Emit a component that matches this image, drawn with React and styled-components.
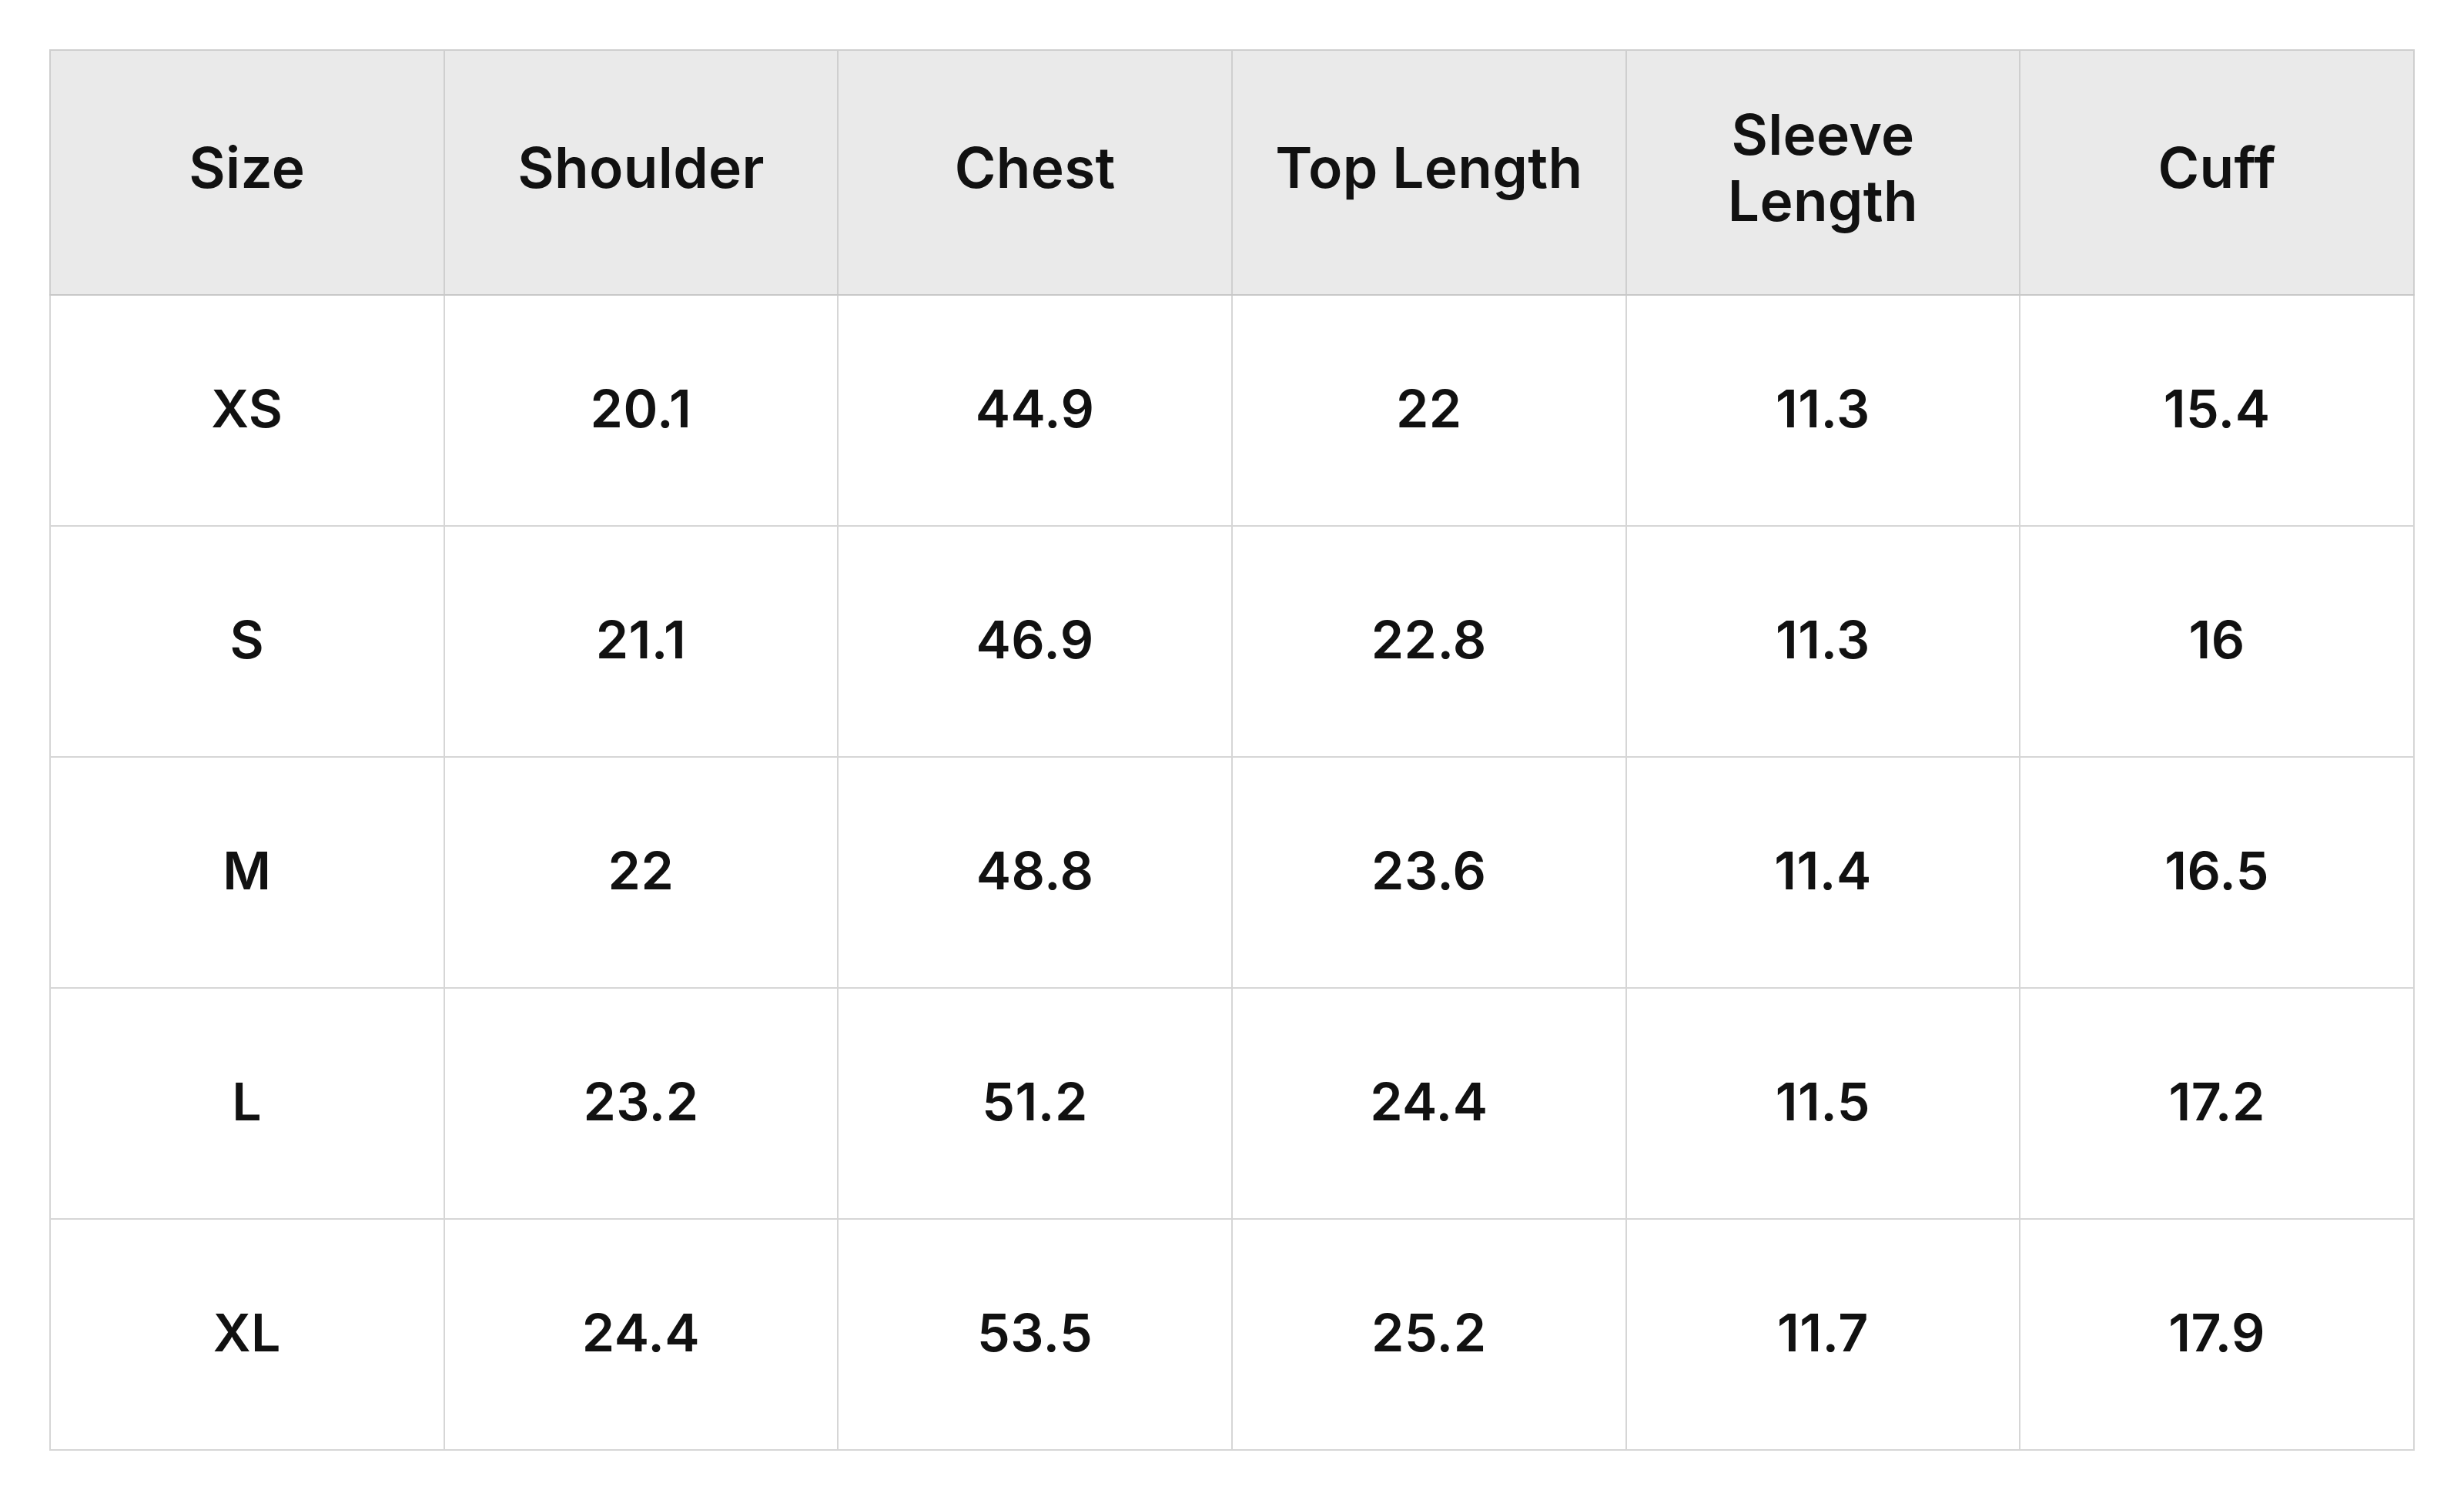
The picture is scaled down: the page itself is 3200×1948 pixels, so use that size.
import React from "react";
import styled, { createGlobalStyle } from "styled-components";

const Global = createGlobalStyle`
  html, body { margin: 0; padding: 0; background: #ffffff; }
  body { font-family: Inter, "Noto Sans", "Liberation Sans", sans-serif; color: #111111; }
`;

const Page = styled.div`
  padding: 64px;
  box-sizing: border-box;
  width: 3200px;
`;

const Table = styled.table`
  width: 100%;
  table-layout: fixed;
  border-collapse: collapse;
  border: 2px solid #c8c8c8;
`;

const HeadCell = styled.th`
  height: 318px;
  padding: 0 36px 12px;
  box-sizing: border-box;
  background: #eaeaea;
  border: 2px solid #cfcfcf;
  border-bottom: 2px solid #c8c8c8;
  font-size: 73px;
  line-height: 86px;
  font-weight: 600;
  text-align: center;
  vertical-align: middle;
  color: #111111;
  letter-spacing: 0.3px;
`;

const Cell = styled.td`
  height: 300px;
  padding: 0 36px 6px;
  box-sizing: border-box;
  border: 2px solid #d6d6d6;
  font-size: 68px;
  font-weight: 600;
  text-align: center;
  vertical-align: middle;
  color: #111111;
  letter-spacing: 0.5px;
`;

const headers = ["Size", "Shoulder", "Chest", "Top Length", "Sleeve Length", "Cuff"];
const rows = [
  ["XS", "20.1", "44.9", "22", "11.3", "15.4"],
  ["S", "21.1", "46.9", "22.8", "11.3", "16"],
  ["M", "22", "48.8", "23.6", "11.4", "16.5"],
  ["L", "23.2", "51.2", "24.4", "11.5", "17.2"],
  ["XL", "24.4", "53.5", "25.2", "11.7", "17.9"],
];

export default function App() {
  return (
    <>
      <Global />
      <Page>
        <Table>
          <thead>
            <tr>
              {headers.map((h) => (
                <HeadCell key={h}>{h}</HeadCell>
              ))}
            </tr>
          </thead>
          <tbody>
            {rows.map((r) => (
              <tr key={r[0]}>
                {r.map((v, i) => (
                  <Cell key={i}>{v}</Cell>
                ))}
              </tr>
            ))}
          </tbody>
        </Table>
      </Page>
    </>
  );
}
